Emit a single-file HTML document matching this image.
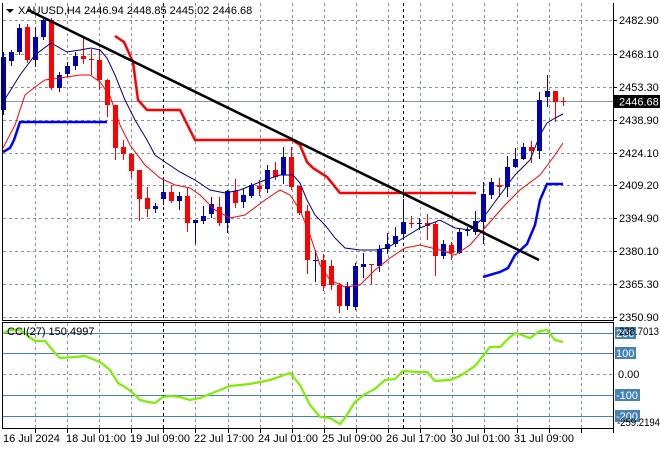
<!DOCTYPE html>
<html><head><meta charset="utf-8"><style>
html,body{margin:0;padding:0;background:#fff;width:660px;height:450px;overflow:hidden}
svg{display:block;font-family:"Liberation Sans",sans-serif;font-size:11px}
</style></head><body>
<svg id="s" width="660" height="450" xmlns="http://www.w3.org/2000/svg">
<rect x="0" y="0" width="660" height="450" fill="#fff"/>
<g id="grid" stroke="#8593a3" stroke-width="1" stroke-dasharray="3,3" fill="none"></g>
<line x1="3" y1="101.5" x2="613" y2="101.5" stroke="#8c96a0"/>
<g stroke="#4682b4" stroke-width="1">
<line x1="3" y1="333.5" x2="613" y2="333.5"/><line x1="3" y1="353.5" x2="613" y2="353.5"/>
<line x1="3" y1="395.5" x2="613" y2="395.5"/><line x1="3" y1="416.5" x2="613" y2="416.5"/></g>
<line x1="3" y1="374.5" x2="613" y2="374.5" stroke="#8593a3" stroke-dasharray="3,3"/>
<g stroke="#000" stroke-dasharray="3,3"><line x1="163.5" y1="3" x2="163.5" y2="320"/><line x1="403.5" y1="3" x2="403.5" y2="320"/><line x1="403.5" y1="323" x2="403.5" y2="429"/><line x1="163.5" y1="323" x2="163.5" y2="429"/></g>
<g id="candles"></g>
<polyline fill="none" stroke="#000080" stroke-width="1" points="3,102 12,88 20,75 35,55 51,43 67,52 80,50 91,48 100,50 107,58 115,75 125,100 135,120 147,140 155,155 165,162 180,172 195,180 210,190 225,193 240,190 250,186 265,180 280,175 293,175 300,183 307,200 315,215 325,225 335,238 345,248 360,250 375,250 387,248 400,240 420,228 440,220 455,228 470,230 483,218 500,195 515,175 530,160 540,135 547,123 555,118 563,114"/>
<polyline fill="none" stroke="#ff0000" stroke-width="1" points="3,148 15,125 25,95 35,87 45,80 60,78 80,75 90,75 100,82 110,96 120,125 130,145 145,165 160,178 175,185 190,188 200,195 215,210 230,218 245,215 265,200 280,190 290,195 300,210 310,235 320,265 330,280 345,287 360,285 375,270 390,258 405,248 420,245 440,250 455,255 470,245 490,222 505,205 520,190 540,175 555,155 563,143"/>
<polyline fill="none" stroke="#ff0000" stroke-width="2.5" points="115,36 124,42 133,62 138,100 147,110 180,110 195,140 292,140 300,145 307,162 313,168 327,177 340,193 476,193"/>
<polyline fill="none" stroke="#0000ff" stroke-width="2.5" points="3,152 10,148 14,140 20,122 107,122"/>
<polyline fill="none" stroke="#0000ff" stroke-width="2.5" points="483,277 500,272 508,268 515,255 527,244 535,225 540,200 547,184 563,184"/>
<line x1="28" y1="10" x2="539" y2="260" stroke="#000" stroke-width="2.5"/>
<polyline fill="none" stroke="#7cf000" stroke-width="2.2" points="3,333 10,330 20,330 28,336 35,341 45,341 55,353 60,358 75,357 85,356 100,362 110,370 118,383 125,387 133,393 140,400 148,402 155,403 163,397 170,396 180,397 190,400 200,398 215,392 230,386 250,384 270,380 290,373 300,385 310,405 320,417 330,418 340,424 345,418 355,402 365,394 375,389 385,380 395,379 403,371 418,372 427,372 435,381 450,380 460,376 475,366 490,347 500,347 510,337 516,333 530,338 540,331 547,330 555,340 563,342"/>
<g fill="none" stroke="#000" stroke-width="1">
<line x1="2.5" y1="3" x2="2.5" y2="320"/><line x1="613.5" y1="3" x2="613.5" y2="320"/><line x1="2" y1="320.5" x2="614" y2="320.5"/>
<rect x="2.5" y="322.5" width="611" height="106"/></g>
<g id="ticks" stroke="#000"></g>
<g fill="#000">
<polygon points="6,9 14,9 10,13"/>
<text x="18" y="14">XAUUSD,H4  2446.94 2448.85 2445.02 2446.68</text>
<text x="7" y="335">CCI(27) 150.4997</text>
</g>
<g fill="#000" font-size="11">
<text x="619" y="24">2482.90</text><text x="619" y="58">2468.10</text><text x="619" y="91">2453.30</text>
<text x="619" y="124">2438.90</text><text x="619" y="157">2424.10</text><text x="619" y="189">2409.20</text>
<text x="619" y="222">2394.90</text><text x="619" y="255">2380.10</text><text x="619" y="288">2365.30</text>
<text x="619" y="321">2350.90</text>
</g>
<rect x="614" y="95" width="46" height="13" fill="#000"/>
<text x="619" y="105.5" fill="#fff">2446.68</text>
<g fill="#4682b4"><rect x="615" y="327" width="21" height="12"/><rect x="615" y="347" width="21" height="12"/><rect x="615" y="389" width="25" height="12"/><rect x="615" y="410" width="25" height="12"/></g>
<g fill="#fff"><text x="616" y="337">200</text><text x="616" y="357">100</text><text x="616" y="399">-100</text><text x="616" y="420">-200</text></g>
<g fill="#000"><text x="619" y="335" textLength="40" lengthAdjust="spacingAndGlyphs">238.7013</text><text x="618" y="378">0.00</text><text x="617" y="426" textLength="43" lengthAdjust="spacingAndGlyphs">-259.2194</text></g>
<g fill="#000" font-size="11">
<text x="3" y="442">16 Jul 2024</text><text x="66" y="442">18 Jul 01:00</text><text x="130" y="442">19 Jul 09:00</text>
<text x="194" y="442">22 Jul 17:00</text><text x="258" y="442">24 Jul 01:00</text><text x="322" y="442">25 Jul 09:00</text>
<text x="386" y="442">26 Jul 17:00</text><text x="450" y="442">30 Jul 01:00</text><text x="514" y="442">31 Jul 09:00</text>
</g>
</svg>
<script>
var NS="http://www.w3.org/2000/svg";
function el(p,t,a){var e=document.createElementNS(NS,t);for(var k in a)e.setAttribute(k,a[k]);p.appendChild(e);return e;}
var g=document.getElementById('grid');
var hs=[20,54,87,120,153,185,218,251,284,317];
hs.forEach(function(y){el(g,'line',{x1:3,y1:y+.5,x2:613,y2:y+.5});});
for(var x=35;x<613;x+=32.1){var xx=Math.round(x)+.5;if(Math.abs(xx-163.5)<3||Math.abs(xx-403.5)<3)continue;el(g,'line',{x1:xx,y1:3,x2:xx,y2:320});el(g,'line',{x1:xx,y1:323,x2:xx,y2:429});}
var t=document.getElementById('ticks');
hs.forEach(function(y){el(t,'line',{x1:613,y1:y+.5,x2:617,y2:y+.5});});
for(var x=35;x<613;x+=32.1){var xx=Math.round(x)+.5;el(t,'line',{x1:xx,y1:429,x2:xx,y2:433});}
var C=[['b',57,110,52,115],['b',52,61,50,66],['b',28,52,24,55],['r',27,60,24,63],['b',37,60,27,67],['b',20,37,18,40],['r',20,88,18,90],['b',75,88,72,92],['b',66,74,62,77],['b',56,66,52,70],
['r',56,59,37,64],['r',59,60,49,75],['r',60,80,49,90],['r',80,105,79,117],['r',105,148,105,160],['r',147,154,140,160],['r',154,171,153,178],['r',170,199,170,221],['r',198,209,187,217],['b',206,209,203,213],
['b',192,199,180,205],['r',192,201,185,203],['b',196,201,192,210],['r',196,223,188,232],['b',220,223,220,244],['b',216,221,206,224],['b',204,214,197,218],['r',207,223,197,226],['b',191,223,190,233],['r',191,203,179,208],
['b',195,202,188,208],['b',185,196,183,198],['r',186,189,180,196],['b',170,189,165,193],['r',170,177,162,180],['b',157,175,147,184],['r',157,187,147,190],['r',186,213,186,215],['r',211,260,205,274],['b',260,261,250,282],
['r',260,286,254,291],['r',266,285,260,290],['r',285,306,283,313],['b',286,306,282,310],['b',266,307,263,310],['b',264,267,253,278],['r',264,265,264,285],['b',249,266,245,272],['b',244,249,233,254],['b',236,244,227,247],
['b',222,234,199,240],['r',223,224,216,228],['b',223,224,218,230],['r',223,226,214,240],['r',224,256,222,276],['b',244,256,240,259],['r',245,253,242,260],['b',232,253,229,254],['b',230,231,227,236],['b',221,232,211,235],
['b',194,222,182,244],['b',182,195,178,199],['r',185,187,178,197],['b',167,187,156,197],['b',159,167,148,168],['b',147,159,143,160],['r',147,151,141,163],['b',100,151,92,159],['b',91,97,75,107],['r',91,102,91,122],['r',101,102,97,106]];
var cg=document.getElementById('candles');
C.forEach(function(c,k){var x=3+8*k;var col=c[0]=='b'?'#0000b4':'#ff0000';
el(cg,'line',{x1:x+.5,y1:c[3],x2:x+.5,y2:c[4],stroke:col,'stroke-width':1});
var h=Math.max(1,c[2]-c[1]);el(cg,'rect',{x:x-2,y:c[1],width:5,height:h,fill:col});});
</script>
</body></html>
